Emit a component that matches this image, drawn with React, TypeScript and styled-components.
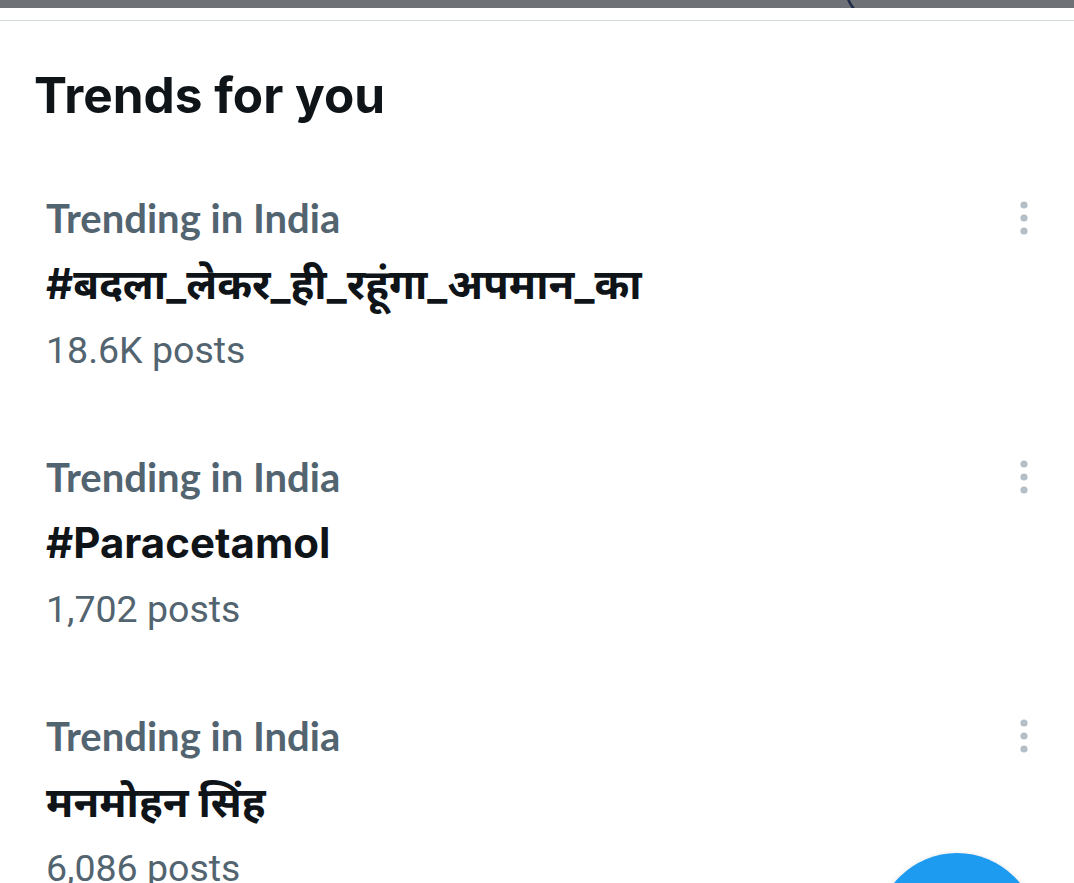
import React from "react";
import styled, { createGlobalStyle } from "styled-components";

const Global = createGlobalStyle`
  html, body { margin: 0; padding: 0; background: #ffffff; }
  body { width: 1074px; height: 883px; overflow: hidden; }
`;

const Page = styled.div`
  width: 1074px;
  height: 883px;
  background: #ffffff;
  overflow: hidden;
  position: relative;
`;

const TopBar = styled.div`
  height: 8px;
  background: #6e7175;
  position: relative;
  overflow: hidden;
`;

const Stroke = styled.svg`
  position: absolute;
  left: 840px;
  top: 0;
`;

const Divider = styled.div`
  margin-top: 12px;
  height: 1px;
  background: #d5dedc;
`;

const Title = styled.h1`
  margin: 0;
  padding: 0 0 0 34px;
  font-family: Inter, "Noto Sans", sans-serif;
  font-weight: 700;
  font-size: 49.5px;
  line-height: 60px;
  color: #0f1419;
  margin-top: 44px;
`;

const List = styled.div`
  display: flex;
  flex-direction: column;
  margin-top: 68px;
`;

const Item = styled.div`
  display: flex;
  flex-direction: row;
  align-items: flex-start;
  justify-content: space-between;
  padding: 0 46px;
  height: 259px;
`;

const Body = styled.div`
  display: flex;
  flex-direction: column;
`;

const Category = styled.div`
  font-family: Lato, "Noto Sans", sans-serif;
  font-weight: 700;
  font-size: 40px;
  line-height: 50px;
  color: #536471;
`;

const Tag = styled.div`
  margin-top: 8px;
  font-family: Inter, "Noto Sans", sans-serif;
  font-weight: 700;
  font-size: 42px;
  line-height: 66px;
  color: #0f1419;
`;

const Posts = styled.div`
  margin-top: 4px;
  font-family: Roboto, "Noto Sans", sans-serif;
  font-weight: 400;
  font-size: 37.5px;
  line-height: 58px;
  color: #536471;
`;

const More = styled.svg`
  margin-top: 7px;
  margin-right: -2px;
  flex: none;
`;

const Fab = styled.div`
  position: absolute;
  left: 876px;
  top: 853px;
  width: 162px;
  height: 162px;
  border-radius: 50%;
  background: #1d9bf0;
  box-shadow: 0 2px 6px rgba(0, 0, 0, 0.18);
`;

const trends = [
  { tag: "#बदला_लेकर_ही_रहूंगा_अपमान_का", posts: "18.6K posts" },
  { tag: "#Paracetamol", posts: "1,702 posts" },
  { tag: "मनमोहन सिंह", posts: "6,086 posts" },
];

const Dots = () => (
  <More width="12" height="36" viewBox="0 0 12 36">
    <circle cx="6" cy="5" r="3.6" fill="#b4bec6" />
    <circle cx="6" cy="18" r="3.6" fill="#b4bec6" />
    <circle cx="6" cy="31" r="3.6" fill="#b4bec6" />
  </More>
);

export default function App() {
  return (
    <Page>
      <Global />
      <TopBar>
        <Stroke width="20" height="8" viewBox="0 0 20 8">
          <path d="M8 -1 Q10 4 14 9" stroke="#1f2a4a" strokeWidth="2.5" fill="none" />
        </Stroke>
      </TopBar>
      <Divider />
      <Title>Trends for you</Title>
      <List>
        {trends.map((t) => (
          <Item key={t.tag}>
            <Body>
              <Category>Trending in India</Category>
              <Tag>{t.tag}</Tag>
              <Posts>{t.posts}</Posts>
            </Body>
            <Dots />
          </Item>
        ))}
      </List>
      <Fab />
    </Page>
  );
}
